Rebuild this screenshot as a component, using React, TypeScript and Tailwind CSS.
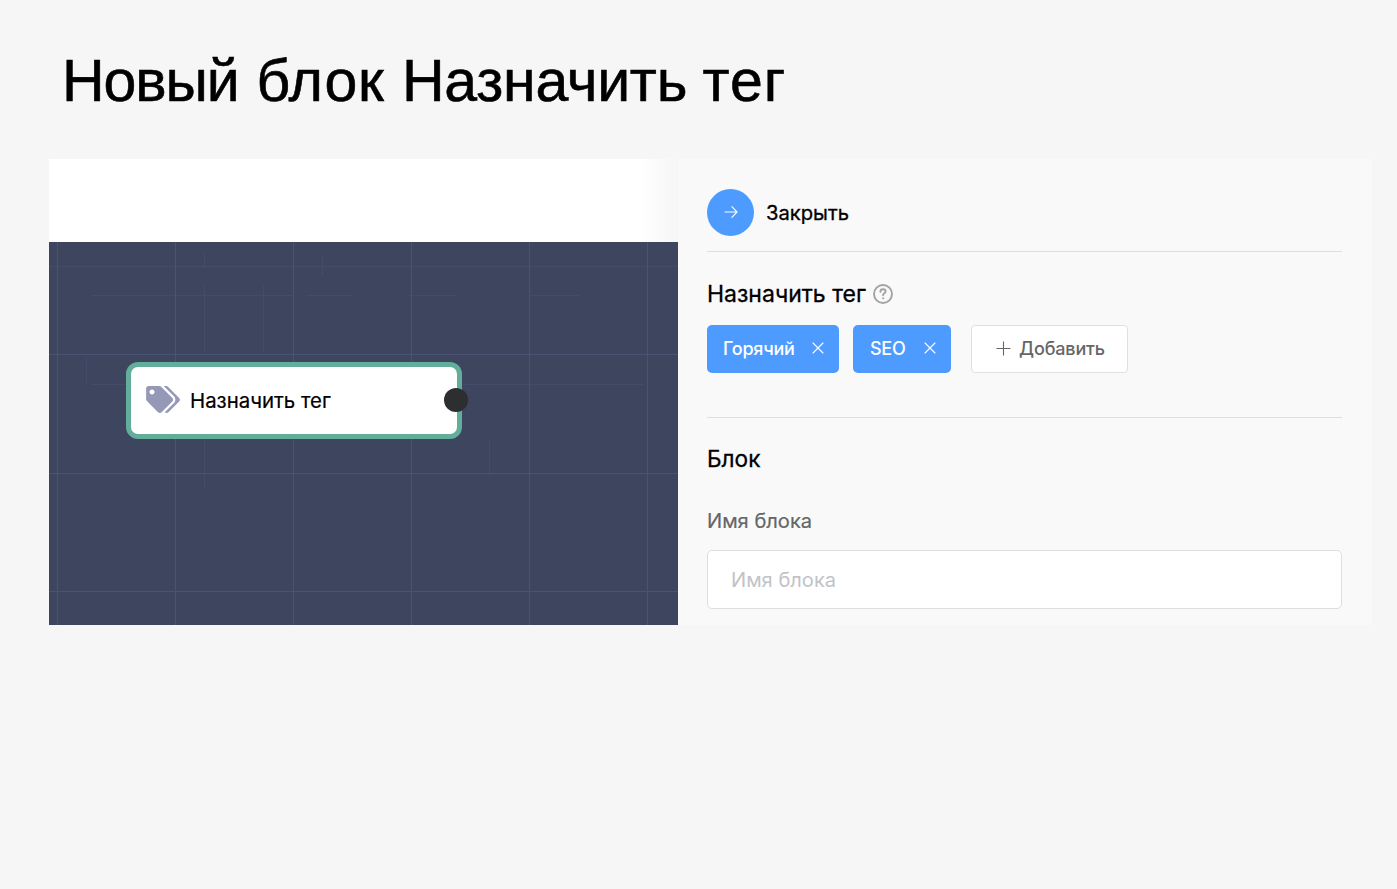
import { FaTags } from "react-icons/fa";

function ArrowIcon() {
  return (
    <svg className="h-[14px] w-[14px]" viewBox="0 0 14 14" fill="none" stroke="currentColor" strokeWidth="1.1" strokeLinecap="round" strokeLinejoin="round">
      <path d="M1 7h12M7.9 1.7 13 7l-5.1 5.3" />
    </svg>
  );
}

function CrossIcon() {
  return (
    <svg className="h-3 w-3 shrink-0" viewBox="0 0 12 12" fill="none" stroke="currentColor" strokeWidth="1.1" strokeLinecap="round">
      <path d="m1 1 10 10M11 1 1 11" />
    </svg>
  );
}

function HelpIcon() {
  return (
    <svg className="h-5 w-5" viewBox="0 0 20 20" fill="none" stroke="#a3a3a3" strokeWidth="1.9" strokeLinecap="round" strokeLinejoin="round">
      <circle cx="10" cy="10" r="9" />
      <path d="M7.4 7.7c0-1.5 1.1-2.5 2.6-2.5s2.6 1 2.6 2.3c0 1.8-2.5 1.9-2.5 3.7" />
      <circle cx="10.1" cy="14.3" r="0.6" fill="#a3a3a3" strokeWidth="1" />
    </svg>
  );
}

function CanvasGrid() {
  return (
    <svg className="absolute inset-0 h-full w-full" viewBox="0 0 629 383" fill="none">
      <path stroke="#444c68" d="M155.5 12v14M155.5 44v66M214.5 44v66M273.5 14v20M37.5 115v28M155.5 197v50M440.5 197v38M0 24.5h629M43 53.5h200M257 53.5h47M360 53.5h48M480 53.5h50M42 142.5h35M414 142.5h180" />
      <path stroke="#4a5371" d="M8.5 0v383M126.5 0v383M244.5 0v383M362.5 0v383M480.5 0v383M598.5 0v383M0 112.5h629M0 231.5h629M0 349.5h629" />
    </svg>
  );
}

function Tag({ label, className }: { label: string; className: string }) {
  return (
    <span className={`flex h-12 items-center justify-between rounded-[5px] bg-[#4d9bff] pr-[15px] pb-[2px] text-white ${className}`}>
      <span>{label}</span>
      <CrossIcon />
    </span>
  );
}

export default function App() {
  return (
    <main className="h-[889px] w-[1397px] overflow-hidden bg-[#f6f6f6] pl-[49px] font-['Inter',sans-serif] text-black">
      <h1 className="h-[159px] pt-[52px] pl-[13px] font-['Liberation_Sans',sans-serif] text-[59px] leading-[59px] whitespace-nowrap [-webkit-text-stroke:0.6px_black]">
        <span className="tracking-[-1.1px]">Новый</span>{" "}
        <span className="ml-[1.5px] tracking-[0.8px]">блок</span>{" "}
        <span className="ml-px tracking-[-0.25px]">Назначить</span>{" "}
        <span className="-ml-px tracking-[1px]">тег</span>
      </h1>
      <div className="flex h-[466px] w-[1323px]">
        <section className="flex w-[629px] flex-col">
          <div className="h-[83px] bg-linear-to-r from-white from-94% to-[#f6f6f6]" />
          <div className="relative flex-1 overflow-hidden bg-[#3e455f]">
            <CanvasGrid />
            <div className="absolute top-[120px] left-[77px] flex h-[77px] w-[336px] items-center rounded-[12px] border-[5.5px] border-[#63ae9b] bg-white pl-[15px]">
              <FaTags className="mb-[3px] h-[27px] w-[34px] text-[#9698b8]" />
              <span className="ml-[10px] pt-[2px] text-[20.4px] whitespace-nowrap [-webkit-text-stroke:0.2px_black]">Назначить тег</span>
              <span className="absolute top-[21px] -right-[11px] h-6 w-6 rounded-full bg-[#2d2e2f]" />
            </div>
          </div>
        </section>
        <section className="flex w-[694px] flex-col bg-[#f9f9f9] pr-[30px] pl-[29px]">
          <div className="flex h-[93px] items-center gap-3 border-b border-[#dedede] pt-[14px]">
            <button className="flex h-[47px] w-[47px] items-center justify-center rounded-full bg-[#4d9bff] text-white">
              <ArrowIcon />
            </button>
            <span className="pt-[2px] text-[20.2px] [-webkit-text-stroke:0.3px_black]">Закрыть</span>
          </div>
          <div className="flex h-[166px] flex-col border-b border-[#dedede] pt-[27px]">
            <h2 className="flex h-[30px] items-center gap-[7px] text-[23px] whitespace-nowrap [-webkit-text-stroke:0.3px_black]">
              Назначить тег <HelpIcon />
            </h2>
            <div className="mt-[16px] flex items-center text-[18px] font-medium whitespace-nowrap">
              <Tag label="Горячий" className="w-[132px] pl-4 tracking-[-0.25px]" />
              <Tag label="SEO" className="ml-[14px] w-[98px] pl-[17px] tracking-[-0.3px]" />
              <button className="ml-[20px] flex h-12 w-[157px] items-center justify-center gap-2 rounded-[4px] border border-[#e0e0e0] bg-white pb-[2px] pl-[2px] tracking-[-0.15px] text-[#666]">
                <svg className="h-[15px] w-[15px]" viewBox="0 0 15 15" stroke="currentColor" strokeWidth="1.1">
                  <path d="M0.5 7.5h14M7.5 0.5v14" />
                </svg>
                Добавить
              </button>
            </div>
          </div>
          <h2 className="mt-[26px] h-[30px] text-[22.6px] leading-[30px] [-webkit-text-stroke:0.3px_black]">Блок</h2>
          <label className="mt-[33px] h-[28px] text-[20.1px] leading-[28px] text-[#666] [-webkit-text-stroke:0.2px_#666]">Имя блока</label>
          <input
            className="mt-[15px] h-[59px] w-full rounded-[5px] border border-[#dedede] bg-white pl-[23px] text-[20.1px] outline-none placeholder:text-[#c1c3c6]"
            placeholder="Имя блока"
          />
        </section>
      </div>
    </main>
  );
}
